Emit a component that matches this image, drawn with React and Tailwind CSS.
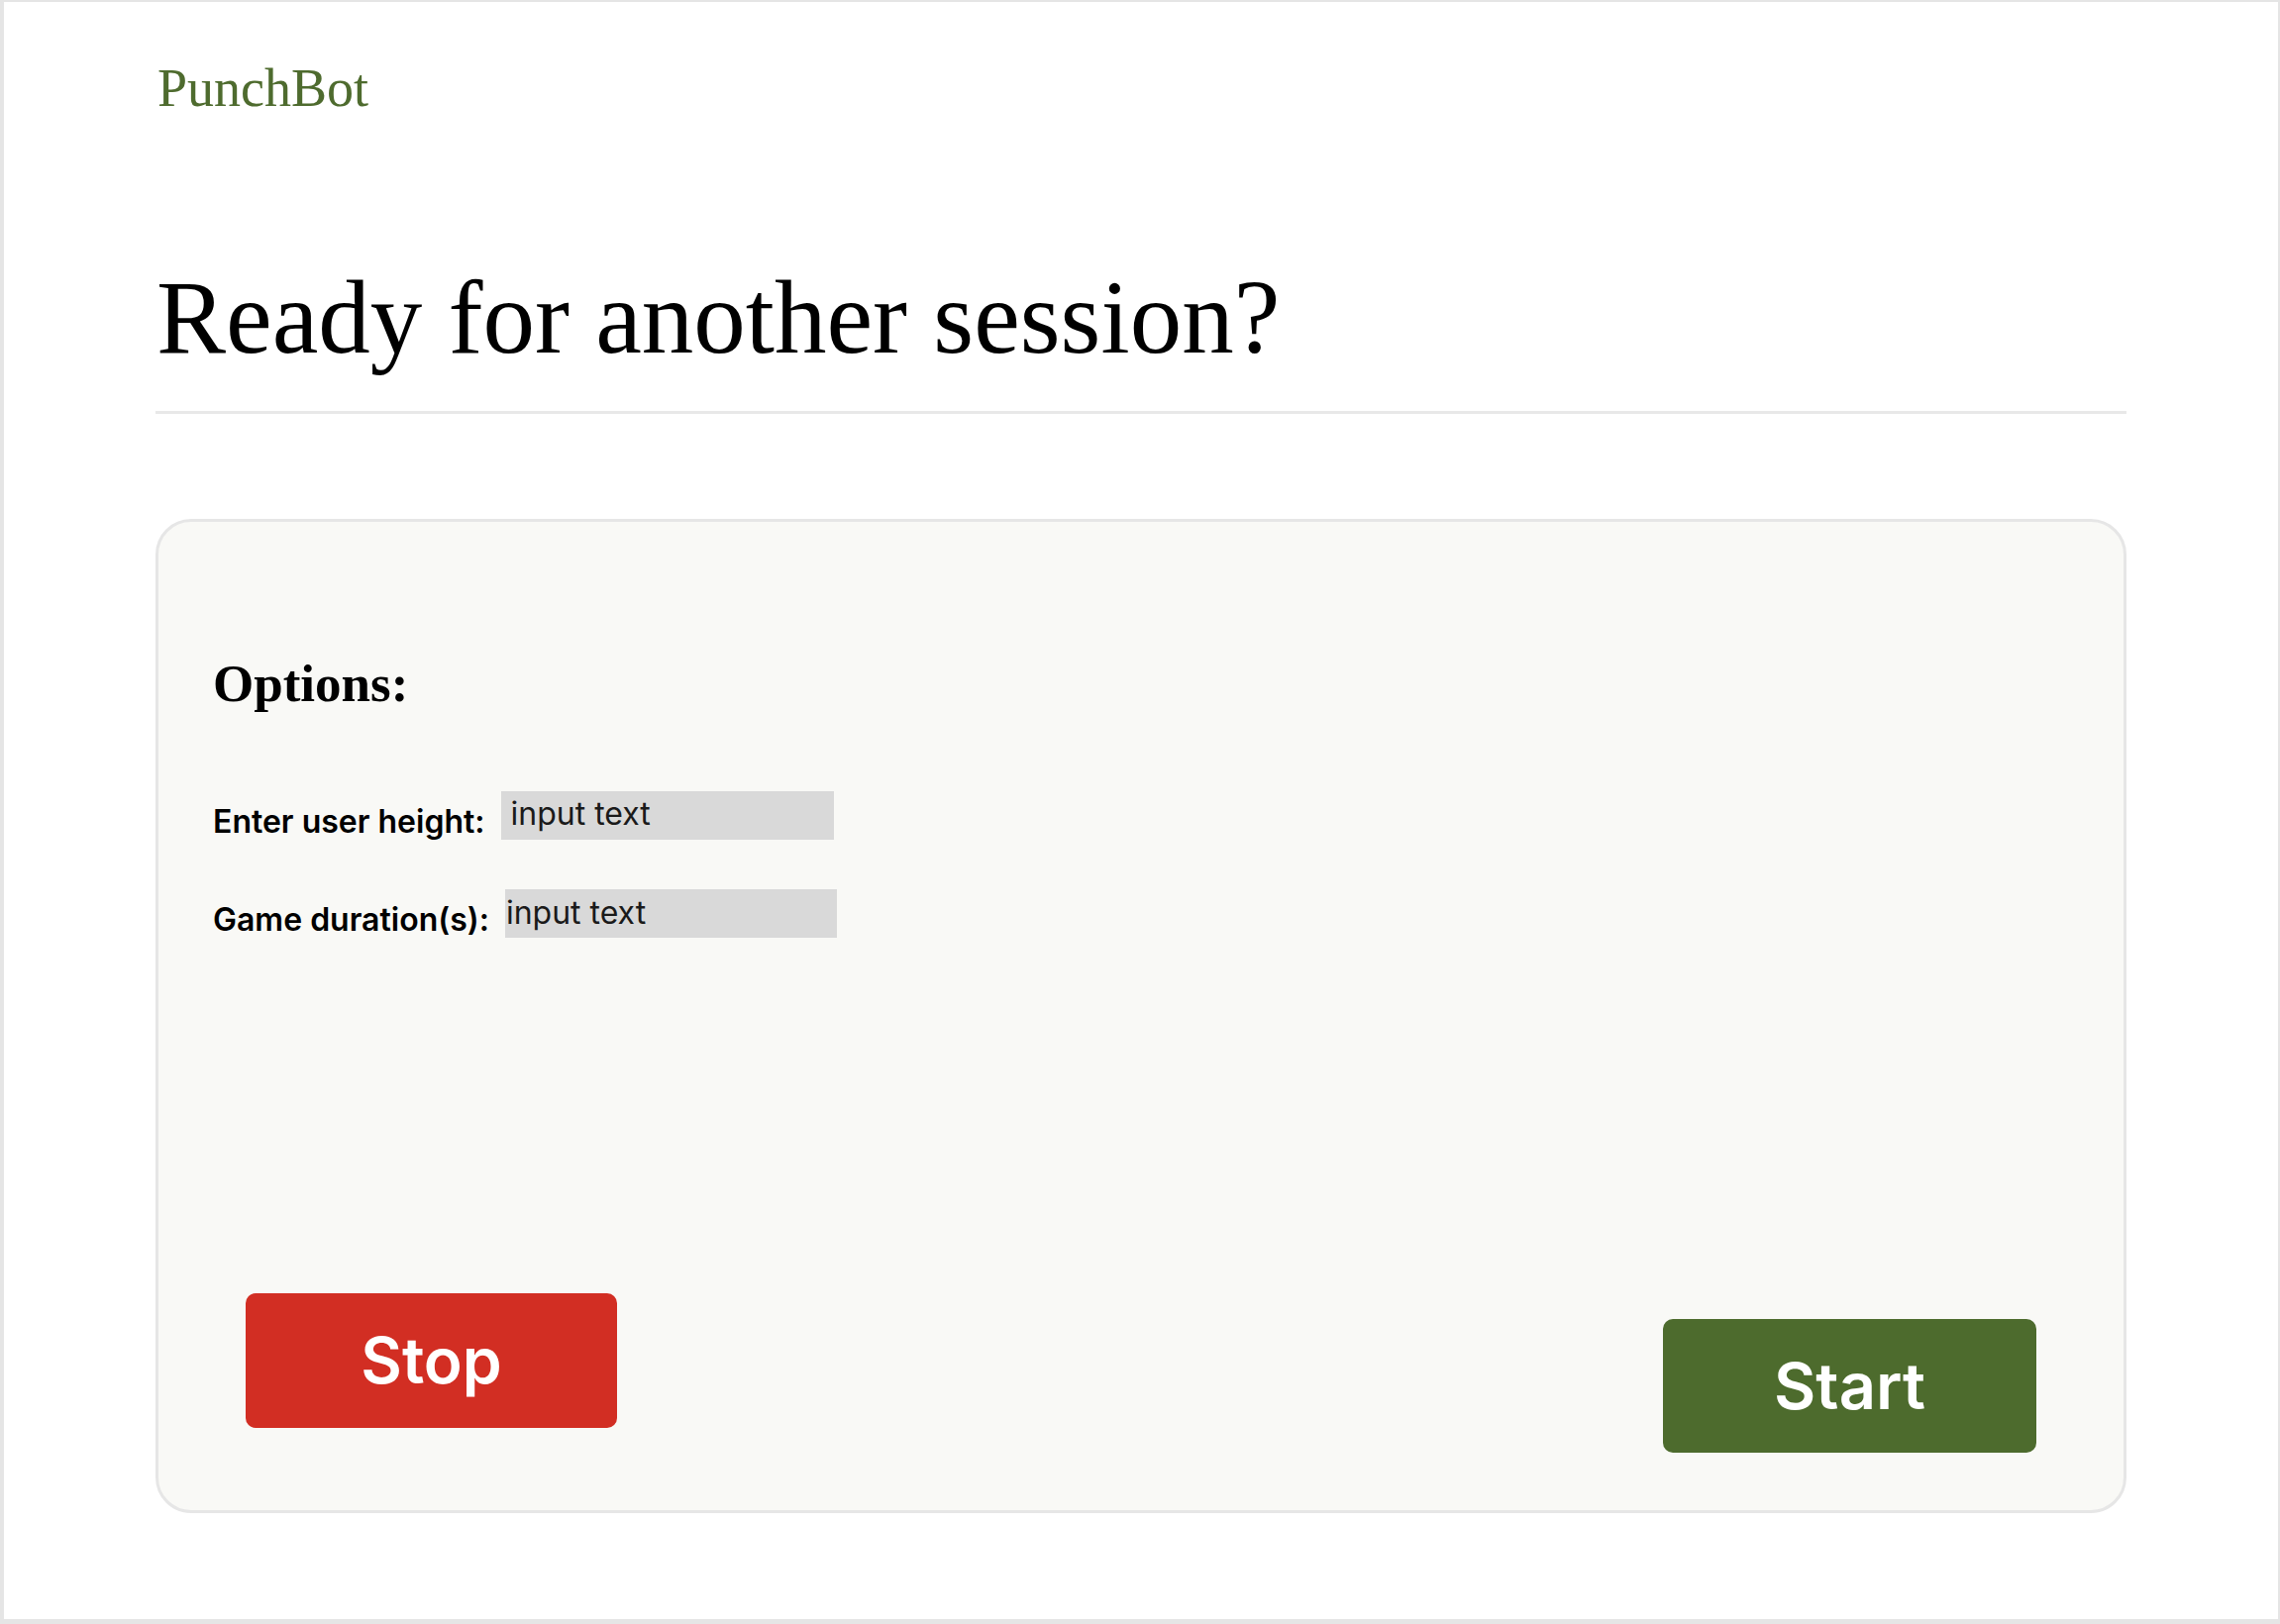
import React from 'react';

// Session setup screen
function App() {
  return (
    <div className="w-[2302px] h-[1640px] box-border bg-white border-[#e5e5e5] border-l-4 border-t-2 border-r-2 border-b-[5px] pl-[153px] pr-[153px] pt-[60px]">
      <div className="text-[54px] leading-none text-[#4e6b2e] font-['Liberation_Serif',serif] pl-[2px]">
        PunchBot
      </div>

      <h1 className="mt-[152px] text-[105px] leading-none text-black font-['Liberation_Serif',serif] pl-[1px]">
        Ready for another session?
      </h1>

      <div className="mt-[42px] h-[3px] bg-[#e8e8e8]" />

      <div className="mt-[106px] h-[1004px] box-border rounded-[36px] border-[3px] border-[#e6e6e6] bg-[#f9f9f6] flex flex-col">
        <div className="pl-[55px] pt-[137px] font-['Inter',sans-serif]">
          <h2 className="text-[53px] leading-none font-bold text-black font-['Liberation_Serif',serif]">
            Options:
          </h2>

          <div className="mt-[82px] flex items-end gap-[17px]">
            <span className="text-[32px] leading-[36px] font-semibold text-black">Enter user height:</span>
            <div className="w-[336px] h-[49px] bg-[#d9d9d9] px-[9px] pt-[5px] text-[32px] leading-[36px] text-[#1a1a1a]">
              input text
            </div>
          </div>

          <div className="mt-[50px] flex items-end gap-[16px]">
            <span className="text-[32px] leading-[36px] font-semibold text-black">Game duration(s):</span>
            <div className="w-[335px] h-[49px] bg-[#d9d9d9] px-[1px] pt-[6px] text-[32px] leading-[36px] text-[#1a1a1a]">
              input text
            </div>
          </div>
        </div>

        <div className="mt-auto flex justify-between items-end px-[88px] pb-[58px] font-['Inter',sans-serif]">
          <button className="mb-[25px] w-[375px] h-[136px] rounded-[10px] bg-[#d22e23] text-white text-[64px] font-semibold">
            Stop
          </button>
          <button className="w-[377px] h-[135px] rounded-[10px] bg-[#4d6b2d] text-white text-[65px] font-semibold">
            Start
          </button>
        </div>
      </div>
    </div>
  );
}

export default App;
